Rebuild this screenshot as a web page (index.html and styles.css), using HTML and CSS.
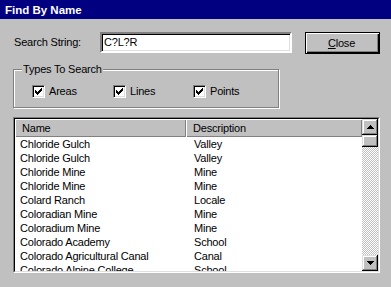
FILE: index.html
```html
<!DOCTYPE html>
<html>
<head>
<meta charset="utf-8">
<link rel="stylesheet" href="styles.css">
</head>
<body>
<div class="window">
  <div class="titlebar">Find By Name</div>
  <div class="search-row">
    <div class="search-label">Search String:</div>
    <div class="field">C?L?R</div>
    <div class="btn-default"><u>C</u>lose</div>
  </div>
  <div class="group">
    <div class="legend">Types To Search</div>
    <div class="checks">
      <div class="check-item"><span class="checkbox"><svg width="7" height="7" viewBox="0 0 7 7" shape-rendering="crispEdges"><rect x="0" y="2" width="1" height="3"/><rect x="1" y="3" width="1" height="3"/><rect x="2" y="4" width="1" height="3"/><rect x="3" y="3" width="1" height="3"/><rect x="4" y="2" width="1" height="3"/><rect x="5" y="1" width="1" height="3"/><rect x="6" y="0" width="1" height="3"/></svg></span><span>Areas</span></div>
      <div class="check-item"><span class="checkbox"><svg width="7" height="7" viewBox="0 0 7 7" shape-rendering="crispEdges"><rect x="0" y="2" width="1" height="3"/><rect x="1" y="3" width="1" height="3"/><rect x="2" y="4" width="1" height="3"/><rect x="3" y="3" width="1" height="3"/><rect x="4" y="2" width="1" height="3"/><rect x="5" y="1" width="1" height="3"/><rect x="6" y="0" width="1" height="3"/></svg></span><span>Lines</span></div>
      <div class="check-item"><span class="checkbox"><svg width="7" height="7" viewBox="0 0 7 7" shape-rendering="crispEdges"><rect x="0" y="2" width="1" height="3"/><rect x="1" y="3" width="1" height="3"/><rect x="2" y="4" width="1" height="3"/><rect x="3" y="3" width="1" height="3"/><rect x="4" y="2" width="1" height="3"/><rect x="5" y="1" width="1" height="3"/><rect x="6" y="0" width="1" height="3"/></svg></span><span>Points</span></div>
    </div>
  </div>
  <div class="list">
    <div class="list-inner">
      <div class="list-main">
        <div class="header">
          <div class="hcell hname">Name</div>
          <div class="hcell hdesc">Description</div>
        </div>
        <div class="rows">
          <div class="row"><span class="cname">Chloride Gulch</span><span class="cdesc">Valley</span></div>
          <div class="row"><span class="cname">Chloride Gulch</span><span class="cdesc">Valley</span></div>
          <div class="row"><span class="cname">Chloride Mine</span><span class="cdesc">Mine</span></div>
          <div class="row"><span class="cname">Chloride Mine</span><span class="cdesc">Mine</span></div>
          <div class="row"><span class="cname">Colard Ranch</span><span class="cdesc">Locale</span></div>
          <div class="row"><span class="cname">Coloradian Mine</span><span class="cdesc">Mine</span></div>
          <div class="row"><span class="cname">Coloradium Mine</span><span class="cdesc">Mine</span></div>
          <div class="row"><span class="cname">Colorado Academy</span><span class="cdesc">School</span></div>
          <div class="row"><span class="cname">Colorado Agricultural Canal</span><span class="cdesc">Canal</span></div>
          <div class="row"><span class="cname">Colorado Alpine College</span><span class="cdesc">School</span></div>
        </div>
      </div>
      <div class="scrollbar">
        <div class="sb-btn"><svg width="7" height="4" viewBox="0 0 7 4" shape-rendering="crispEdges"><rect x="3" y="0" width="1" height="1"/><rect x="2" y="1" width="3" height="1"/><rect x="1" y="2" width="5" height="1"/><rect x="0" y="3" width="7" height="1"/></svg></div>
        <div class="sb-thumb"></div>
        <div class="sb-track"></div>
        <div class="sb-btn"><svg width="7" height="4" viewBox="0 0 7 4" shape-rendering="crispEdges"><rect x="0" y="0" width="7" height="1"/><rect x="1" y="1" width="5" height="1"/><rect x="2" y="2" width="3" height="1"/><rect x="3" y="3" width="1" height="1"/></svg></div>
      </div>
    </div>
  </div>
</div>
</body>
</html>
```

FILE: styles.css
```css
html, body {
  margin: 0;
  padding: 0;
  background: #c0c0c0;
}

.window {
  width: 391px;
  height: 287px;
  overflow: hidden;
  background: #c0c0c0;
  font-family: "Liberation Sans", Arial, sans-serif;
  font-size: 11px;
  line-height: 14px;
  letter-spacing: -0.2px;
  color: #000;
}

.titlebar {
  box-sizing: border-box;
  height: 19px;
  padding: 2px 0 0 5px;
  line-height: 17px;
  background: #000080;
  color: #fff;
  font-weight: bold;
  font-size: 11.5px;
  letter-spacing: 0;
}

.search-row {
  display: flex;
  align-items: flex-start;
  margin-top: 13px;
  padding-left: 14px;
}

.search-label {
  width: 86px;
  margin-top: 3px;
}

.field {
  box-sizing: border-box;
  width: 192px;
  height: 21px;
  padding: 1px 2px;
  background: #fff;
  border: 2px solid;
  border-color: #808080 #fff #fff #808080;
  box-shadow: inset 1px 1px 0 #000, inset -1px -1px 0 #dfdfdf;
}

.btn-default {
  box-sizing: border-box;
  width: 75px;
  height: 22px;
  margin-left: 13px;
  padding-top: 3px;
  padding-right: 2px;
  text-align: center;
  border: 1px solid #000;
  box-shadow: inset 1px 1px 0 #fff, inset -1px -1px 0 #000, inset -2px -2px 0 #808080;
}

.group {
  position: relative;
  box-sizing: border-box;
  width: 266px;
  height: 39px;
  margin: 15px 0 0 13px;
  padding: 14px 0 0 18px;
  border: 1px solid #808080;
  box-shadow: inset 1px 1px 0 #fff, 1px 1px 0 #fff;
}

.legend {
  position: absolute;
  top: -8px;
  left: 8px;
  padding: 0 1px;
  background: #c0c0c0;
}

.checks {
  display: grid;
  grid-template-columns: 81px 80px auto;
}

.check-item {
  display: flex;
  align-items: flex-start;
  height: 14px;
}

.checkbox {
  box-sizing: border-box;
  display: flex;
  align-items: center;
  justify-content: center;
  width: 13px;
  height: 13px;
  margin-top: 1px;
  margin-right: 4px;
  background: #fff;
  border: 1px solid;
  border-color: #808080 #fff #fff #808080;
  box-shadow: inset 1px 1px 0 #000, inset -1px -1px 0 #dfdfdf;
}

.list {
  box-sizing: border-box;
  width: 367px;
  height: 156px;
  margin: 9px 0 0 13px;
  border: 1px solid;
  border-color: #808080 #fff #fff #808080;
}

.list-inner {
  box-sizing: border-box;
  height: 100%;
  display: flex;
  background: #fff;
  border: 1px solid;
  border-color: #000 #dfdfdf #dfdfdf #000;
}

.list-main {
  flex: 1;
  overflow: hidden;
}

.header {
  display: flex;
  height: 18px;
}

.hcell {
  box-sizing: border-box;
  height: 18px;
  padding-top: 2px;
  background: #c0c0c0;
  box-shadow: inset 1px 1px 0 #fff, inset -1px -1px 0 #808080;
}

.hname {
  width: 171px;
  padding-left: 7px;
}

.hdesc {
  flex: 1;
  padding-left: 7px;
}

.row {
  display: flex;
  height: 14px;
  white-space: nowrap;
}

.cname {
  width: 171px;
  padding-left: 5px;
  box-sizing: border-box;
}

.cdesc {
  padding-left: 8px;
}

.scrollbar {
  width: 16px;
  display: flex;
  flex-direction: column;
}

.sb-btn {
  box-sizing: border-box;
  display: flex;
  align-items: center;
  justify-content: center;
  width: 16px;
  height: 16px;
  background: #c0c0c0;
  box-shadow: inset -1px -1px 0 #000, inset 1px 1px 0 #dfdfdf, inset -2px -2px 0 #808080, inset 2px 2px 0 #fff;
}

.sb-thumb {
  width: 16px;
  height: 12px;
  background: #c0c0c0;
  box-shadow: inset -1px -1px 0 #000, inset 1px 1px 0 #dfdfdf, inset -2px -2px 0 #808080, inset 2px 2px 0 #fff;
}

.sb-track {
  flex: 1;
  background-color: #c0c0c0;
  background-image: conic-gradient(#fff 25%, #c0c0c0 0 50%, #fff 0 75%, #c0c0c0 0);
  background-size: 2px 2px;
}
```
